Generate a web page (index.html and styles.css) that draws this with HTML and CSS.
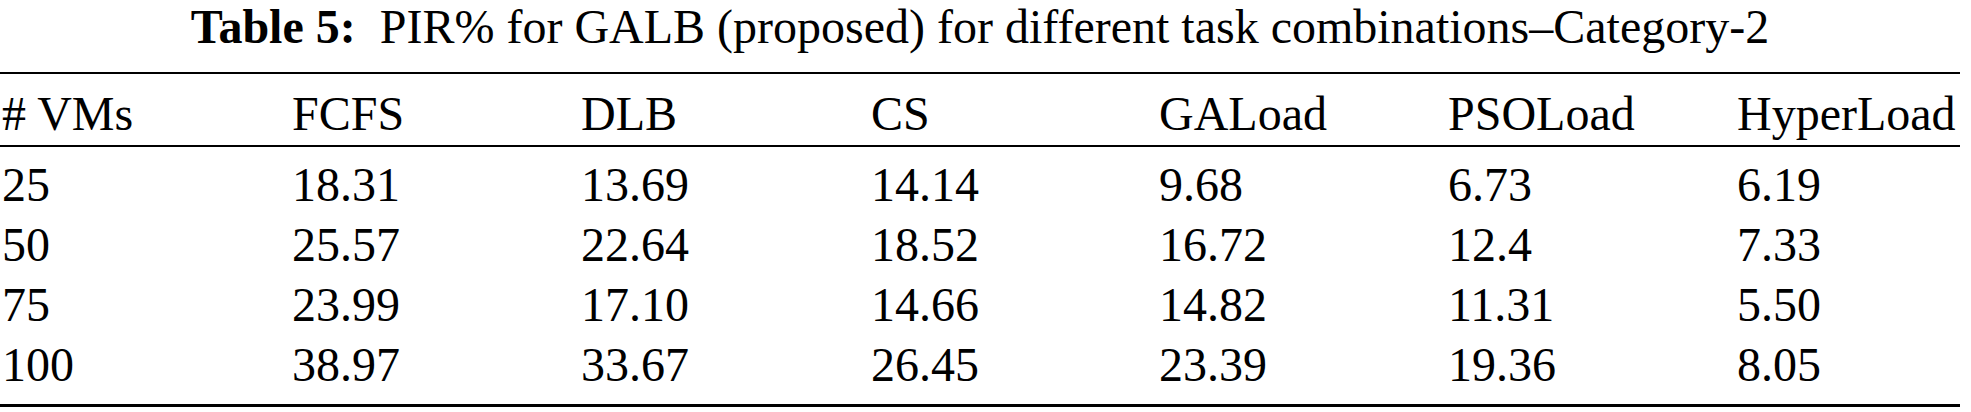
FILE: index.html
```html
<!DOCTYPE html>
<html lang="en">
<head>
<meta charset="utf-8">
<title>Table 5</title>
<link rel="stylesheet" href="styles.css">
</head>
<body>
<div class="page">
  <div class="caption"><span class="cap-label">Table 5:</span>&nbsp; PIR% for GALB (proposed) for different task combinations–Category-2</div>
  <table class="data">
    <colgroup>
      <col class="c1"><col class="c2"><col class="c3"><col class="c4"><col class="c5"><col class="c6"><col class="c7">
    </colgroup>
    <thead>
      <tr><th># VMs</th><th>FCFS</th><th>DLB</th><th>CS</th><th>GALoad</th><th>PSOLoad</th><th>HyperLoad</th></tr>
    </thead>
    <tbody>
      <tr><td>25</td><td>18.31</td><td>13.69</td><td>14.14</td><td>9.68</td><td>6.73</td><td>6.19</td></tr>
      <tr><td>50</td><td>25.57</td><td>22.64</td><td>18.52</td><td>16.72</td><td>12.4</td><td>7.33</td></tr>
      <tr><td>75</td><td>23.99</td><td>17.10</td><td>14.66</td><td>14.82</td><td>11.31</td><td>5.50</td></tr>
      <tr class="last"><td>100</td><td>38.97</td><td>33.67</td><td>26.45</td><td>23.39</td><td>19.36</td><td>8.05</td></tr>
    </tbody>
  </table>
</div>
</body>
</html>
```

FILE: styles.css
```css
html, body {
  margin: 0;
  padding: 0;
  background: #ffffff;
}

.page {
  width: 1960px;
  height: 412px;
  font-family: "Liberation Serif", "Times New Roman", serif;
  color: #000;
  overflow: hidden;
}

.caption {
  font-size: 48px;
  line-height: 54px;
  height: 72px;
  text-align: center;
  white-space: nowrap;
}

.cap-label {
  font-weight: bold;
}

.data {
  border-collapse: collapse;
  width: 1960px;
  table-layout: fixed;
  font-size: 48px;
  border-top: 2px solid #000;
  border-bottom: 3px solid #000;
}

.c1 { width: 290px; }
.c2 { width: 289px; }
.c3 { width: 290px; }
.c4 { width: 288px; }
.c5 { width: 289px; }
.c6 { width: 289px; }
.c7 { width: 225px; }

.data th,
.data td {
  text-align: left;
  font-weight: normal;
  line-height: 44px;
  padding: 0 0 0 2px;
  white-space: nowrap;
}

.data thead th {
  padding-top: 18px;
  padding-bottom: 9px;
  border-bottom: 2px solid #000;
}

.data tbody td {
  padding-top: 16px;
  padding-bottom: 0;
}

.data tbody tr.last td {
  padding-bottom: 17px;
}
```
